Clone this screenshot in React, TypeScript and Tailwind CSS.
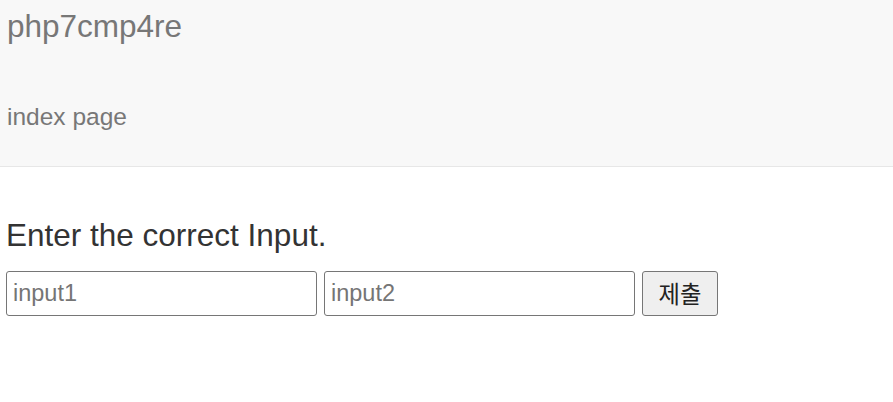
export default function App() {
  const font = { fontFamily: '"Liberation Sans", Arial, "Noto Sans CJK KR", sans-serif' };
  return (
    <div className="min-h-[402px] bg-white" style={font}>
      <div className="h-[167px] bg-[#f8f8f8] border-b border-[#e7e7e7] px-[7px]">
        <div className="pt-[9px] text-[31.5px] leading-[35px] text-[#777]">php7cmp4re</div>
        <div className="mt-[59px] text-[24.5px] leading-[28px] text-[#777]">index page</div>
      </div>
      <div className="px-[6px]">
        <div className="mt-[51px] text-[31.5px] leading-[35px] text-[#333]">Enter the correct Input.</div>
        <div className="mt-[18px] flex items-center gap-[7px]">
          <input
            placeholder="input1"
            className="w-[311px] h-[45px] border border-[#767676] rounded-[3px] px-[6px] text-[23.5px] text-[#333] placeholder:text-[#757575] outline-none"
            style={font}
          />
          <input
            placeholder="input2"
            className="w-[311px] h-[45px] border border-[#767676] rounded-[3px] px-[6px] text-[23.5px] text-[#333] placeholder:text-[#757575] outline-none"
            style={font}
          />
          <button
            className="w-[76px] h-[45px] border border-[#767676] rounded-[3px] bg-[#efefef] text-[23.3px] text-[#222] flex items-center justify-center"
            style={{ fontFamily: '"Noto Sans CJK KR", sans-serif' }}
          >
            제출
          </button>
        </div>
      </div>
    </div>
  );
}
